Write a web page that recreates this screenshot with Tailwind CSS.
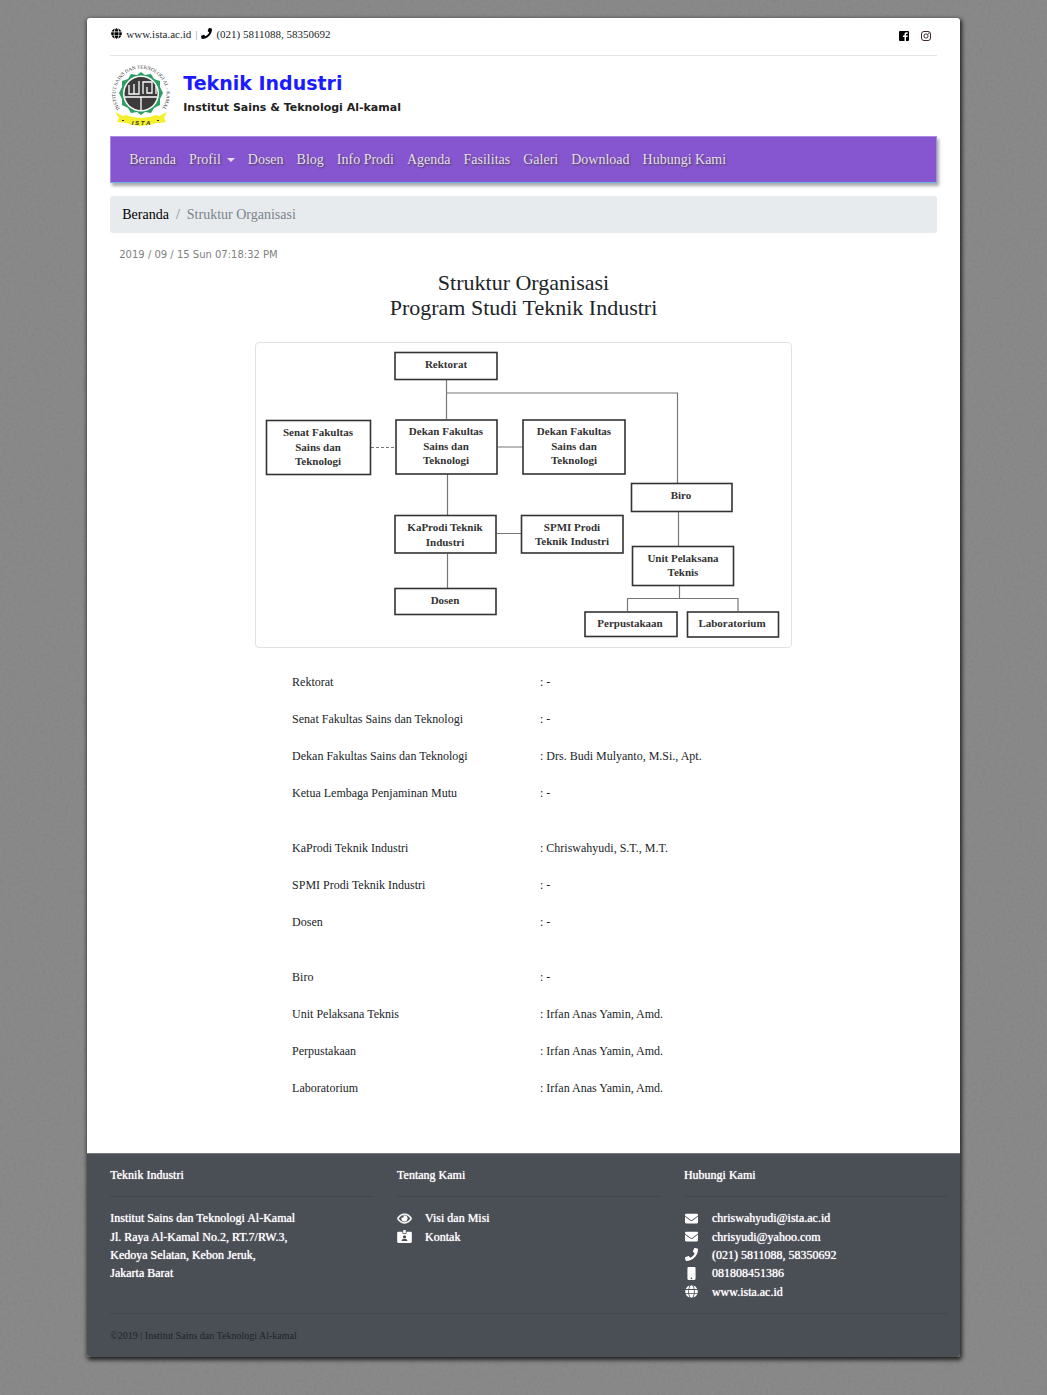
<!DOCTYPE html>
<html lang="id">
<head>
<meta charset="utf-8">
<meta name="viewport" content="width=device-width, initial-scale=1">
<title>Struktur Organisasi - Teknik Industri</title>
<script src="https://cdn.jsdelivr.net/npm/@tailwindcss/browser@4"></script>
</head>
<body class="relative isolate min-h-screen bg-[#898989] font-['Liberation_Serif',serif] text-[12px] leading-[18px] text-[#212529]">
<!-- icon sprite and background grain -->
<svg class="absolute inset-0 -z-10 h-full w-full" aria-hidden="true">
  <defs>
    <filter id="grain" x="0" y="0" width="100%" height="100%">
      <feTurbulence type="fractalNoise" baseFrequency="0.35" numOctaves="4" seed="4"/>
      <feColorMatrix type="matrix" values="0 0 0 0 0.2  0 0 0 0 0.2  0 0 0 0 0.2  0.6 0.6 0 0 -0.53"/>
    </filter>
    <symbol id="globe" viewBox="0 0 496 512"><path fill="currentColor" d="M336.500 160C322 70.700 287.800 8 248 8s-74 62.700-88.500 152h177zM152 256c0 22.200 1.200 43.500 3.300 64h185.300c2.100-20.500 3.300-41.800 3.300-64s-1.200-43.500-3.300-64H155.300c-2.100 20.500-3.300 41.800-3.300 64zm324.700-96c-28.600-67.900-86.500-120.400-158-141.600 24.400 33.800 41.200 84.700 50 141.600h108zM177.200 18.400C105.800 39.600 47.800 92.100 19.300 160h108c8.700-56.900 25.500-107.800 49.900-141.600zM487.400 192H372.700c2.100 21 3.300 42.500 3.300 64s-1.200 43-3.300 64h114.600c5.500-20.500 8.600-41.800 8.600-64s-3.100-43.500-8.500-64zM120 256c0-21.500 1.200-43 3.300-64H8.600C3.200 212.500 0 233.800 0 256s3.200 43.500 8.600 64h114.600c-2-21-3.200-42.500-3.200-64zm39.500 96c14.500 89.300 48.700 152 88.500 152s74-62.700 88.500-152h-177zm159.300 141.600c71.400-21.200 129.400-73.700 158-141.600h-108c-8.800 56.900-25.600 107.800-50 141.600zM19.300 352c28.600 67.900 86.500 120.400 158 141.600-24.400-33.800-41.200-84.700-50-141.600h-108z"/></symbol>
    <symbol id="phone" viewBox="0 0 512 512"><path fill="currentColor" d="M493.400 24.600l-104-24c-11.300-2.600-22.900 3.300-27.500 13.900l-48 112c-4.200 9.800-1.400 21.300 6.900 28l60.600 49.600c-36 76.700-98.900 140.500-177.200 177.200l-49.600-60.600c-6.800-8.300-18.200-11.100-28-6.900l-112 48C3.900 366.500-2 378.100.6 389.400l24 104C27.100 504.200 36.700 512 48 512c256.100 0 464-207.500 464-464 0-11.200-7.700-20.900-18.600-23.400z"/></symbol>
    <symbol id="mail" viewBox="0 0 512 512"><path fill="currentColor" d="M502.300 190.800c3.900-3.100 9.700-.2 9.700 4.700V400c0 26.500-21.500 48-48 48H48c-26.500 0-48-21.500-48-48V195.600c0-5 5.700-7.800 9.700-4.700 22.400 17.400 52.100 39.500 154.100 113.600 21.100 15.400 56.700 47.800 92.200 47.600 35.700.3 72-32.800 92.300-47.600 102-74.100 131.600-96.300 154-113.700zM256 320c23.200.4 56.600-29.200 73.400-41.400 132.700-96.300 142.800-104.700 173.400-128.700 5.800-4.500 9.200-11.500 9.200-18.900v-19c0-26.500-21.500-48-48-48H48c-26.500 0-48 21.500-48 48v19c0 7.400 3.400 14.300 9.200 18.900 30.600 23.900 40.700 32.400 173.400 128.700 16.800 12.200 50.200 41.800 73.400 41.400z"/></symbol>
    <symbol id="mobile" viewBox="0 0 320 512"><path fill="currentColor" d="M272 0H48C21.500 0 0 21.500 0 48v416c0 26.500 21.500 48 48 48h224c26.500 0 48-21.500 48-48V48c0-26.500-21.500-48-48-48zM160 480c-17.700 0-32-14.300-32-32s14.300-32 32-32 32 14.300 32 32-14.300 32-32 32z"/></symbol>
    <symbol id="eye" viewBox="0 0 576 512"><path fill="currentColor" stroke="currentColor" stroke-width="20" d="M288 144a110.940 110.940 0 0 0-31.240 5 55.400 55.400 0 0 1 7.240 27 56 56 0 0 1-56 56 55.400 55.400 0 0 1-27-7.240A111.710 111.710 0 1 0 288 144zm284.520 97.400C518.290 135.590 410.930 64 288 64S57.680 135.640 3.480 241.410a32.350 32.350 0 0 0 0 29.190C57.710 376.410 165.070 448 288 448s230.320-71.640 284.520-177.410a32.350 32.350 0 0 0 0-29.190zM288 400c-98.650 0-189.090-55-237.930-144C98.910 167 189.340 112 288 112s189.090 55 237.930 144C477.100 345 386.660 400 288 400z"/></symbol>
    <symbol id="badge" viewBox="0 0 576 512"><path fill="currentColor" fill-rule="evenodd" d="M48 64h160v64c0 18 14 32 32 32h96c18 0 32-14 32-32V64h160c26 0 48 22 48 48v352c0 26-22 48-48 48H48c-26 0-48-22-48-48V112c0-26 22-48 48-48zm240 144a64 64 0 1 0 0 128 64 64 0 0 0 0-128zM176 432h224v-16c0-36-28-64-64-64h-96c-36 0-64 28-64 64zM240 0h96v128h-96z"/></symbol>
  </defs>
  <rect width="100%" height="100%" filter="url(#grain)"/>
</svg>

<div class="mx-auto mt-[18px] mb-[37px] w-10/12 rounded-[3px] bg-white shadow-[1px_2px_4px_1px_#222]">
  <div class="px-[23px]">
    <div class="flex h-[38px] items-center justify-between border-b border-[#e3e3e3] text-[11px]">
      <div class="flex items-center gap-1 pb-[6px]">
        <svg class="ml-px h-[11px] w-[11px] text-black"><use href="#globe"/></svg>
        <a href="#" class="text-[#212529]">www.ista.ac.id</a>
        <span class="text-[#7fa5b5]">|</span>
        <svg class="h-[11px] w-[11px] text-black"><use href="#phone"/></svg>
        <span>(021) 5811088, 58350692</span>
      </div>
      <div class="flex items-center gap-3 pr-[6px] pb-[2px]">
        <a href="#" aria-label="Facebook"><svg class="h-[10px] w-[10px]" viewBox="0 0 20 20"><path d="M2 0h16a2 2 0 0 1 2 2v16a2 2 0 0 1-2 2h-4v-8h3l.5-3H14V7c0-1 .5-1.500 1.600-1.500h1.700V2.700C16.500 2.600 15.700 2.500 15 2.500c-2.600 0-4 1.500-4 4.200V9H8v3h3v8H2a2 2 0 0 1-2-2V2a2 2 0 0 1 2-2z"/></svg></a>
        <a href="#" aria-label="Instagram"><svg class="h-[10px] w-[10px] text-[#3d2530]" viewBox="0 0 20 20" fill="none" stroke="currentColor" stroke-width="2"><rect x="1" y="1" width="18" height="18" rx="5"/><circle cx="10" cy="10" r="4.200"/><circle cx="15.200" cy="4.800" r=".6"/></svg></a>
      </div>
    </div>

    <header class="flex h-20 gap-[11px] font-['DejaVu_Sans',sans-serif]">
      <svg class="mt-[6px] h-[66px] w-[62px] shrink-0" viewBox="0 0 62 66" role="img" aria-label="Logo ISTA">
        <path id="ring" d="M11 48A25.500 25.500 0 1 1 51 48" fill="none"/>
        <text font-family="Liberation Serif, serif" font-size="5" fill="#333"><textPath href="#ring" startOffset="50%" text-anchor="middle">INSTITUT SAINS DAN TEKNOLOGI AL - KAMAL</textPath></text>
        <path fill="#2b9e63" d="M31 10l4 3 6-1 3 5 6 2 0 6 3 6-3 6 0 6-6 3-3 5-6-1-4 3-4-3-6 1-3-5-6-3 0-6-3-6 3-6 0-6 6-2 3-5 6 1z"/>
        <circle cx="31" cy="31.500" r="18" fill="#fff"/>
        <circle cx="31" cy="31.500" r="16.500" fill="#3c3a3a"/>
        <g fill="none" stroke="#fff" stroke-width="1.300"><path d="M15 35h32M31 35v13M19 23v9h5v-10M24 32h5V19M33 32v-12h9v11h-5v-6M46 24v8"/></g>
        <path fill="#f6ef2d" d="M5 50l8 4 3-1q15 6 30 0l3 1 8-4-3 6 2 4-7 1-3 0q-15 6-30 0l-9-1 2-4z"/>
        <text x="31" y="63" text-anchor="middle" font-family="Liberation Sans, sans-serif" font-style="italic" font-weight="bold" font-size="6" fill="#333">I S T A</text>
        <path fill="#333" d="M12 58h2v1h-2zM47 58h2v1h-2z"/>
      </svg>
      <div class="pt-[14px] font-bold">
        <h1 class="text-[19px] leading-[27px] text-[#1b1bff]">Teknik Industri</h1>
        <p class="mt-[2px] text-[11px] leading-[18px] text-[#222]">Institut Sains &amp; Teknologi Al-kamal</p>
      </div>
    </header>

    <nav class="flex h-[47px] items-center gap-[13px] border border-[#a98be0] border-b-[#6fb6e8] bg-[#8655d0] px-[18px] text-[14px] text-[#e6ddf5] shadow-[2px_3px_3px_#aaa] text-shadow-[1px_1px_2px_#444]">
      <a href="#">Beranda</a>
      <a href="#" class="flex items-center gap-[6px]">Profil <span class="border-x-[4px] border-t-[4px] border-x-transparent border-t-current"></span></a>
      <a href="#">Dosen</a><a href="#">Blog</a><a href="#">Info Prodi</a><a href="#">Agenda</a><a href="#">Fasilitas</a><a href="#">Galeri</a><a href="#">Download</a><a href="#">Hubungi Kami</a>
    </nav>

    <nav aria-label="Breadcrumb" class="mt-[13px] flex h-[37px] items-center gap-[7px] rounded-[3px] bg-[#e7ebee] px-3 text-[14px] text-[#7b848c]">
      <a href="#" class="text-black">Beranda</a><span>/</span><span>Struktur Organisasi</span>
    </nav>

    <main>
      <time class="mt-[13px] block pl-[9px] font-['DejaVu_Sans',sans-serif] text-[10px] text-[#808080]">2019 / 09 / 15 Sun 07:18:32 PM</time>
      <h2 class="mt-[6px] text-center text-[22px] leading-[25px]">Struktur Organisasi<br>Program Studi Teknik Industri</h2>

      <svg class="mx-auto mt-[22px] w-full max-w-[537px] rounded-[4px] border border-[#dee2e6]" viewBox="256 343 535 304" role="img" aria-label="Bagan struktur organisasi" font-family="Liberation Serif, serif" font-size="11" font-weight="bold" text-anchor="middle" fill="#333">
        <g fill="none" stroke="#777" stroke-width="1.200">
          <path d="M446.500 380v39M446.500 393H677.500v90M498 447h25M447.500 474v41M497 533.500h24M447.500 554v34M678.500 512v34M679.500 585v13.500M627.500 611v-12.500h110.500V611"/>
          <path d="M371 447.500h25" stroke-dasharray="3 2"/>
        </g>
        <g fill="#fff" stroke="#333" stroke-width="1.600">
          <rect x="395" y="352.500" width="102" height="27"/>
          <rect x="266.500" y="420.500" width="104" height="54"/>
          <rect x="396" y="420" width="101" height="54"/>
          <rect x="523" y="420" width="102" height="54"/>
          <rect x="631.500" y="483.500" width="100.500" height="28"/>
          <rect x="395" y="515.500" width="101" height="37.500"/>
          <rect x="521.500" y="515.500" width="101.500" height="37.500"/>
          <rect x="632.500" y="546.500" width="101" height="39"/>
          <rect x="395" y="588.500" width="101" height="26"/>
          <rect x="585" y="612" width="92" height="24.500"/>
          <rect x="687.500" y="612" width="91" height="25"/>
        </g>
        <text x="446" y="368">Rektorat</text>
        <text><tspan x="318" y="436">Senat Fakultas</tspan><tspan x="318" y="451">Sains dan</tspan><tspan x="318" y="465">Teknologi</tspan></text>
        <text><tspan x="446" y="435">Dekan Fakultas</tspan><tspan x="446" y="450">Sains dan</tspan><tspan x="446" y="464">Teknologi</tspan></text>
        <text><tspan x="574" y="435">Dekan Fakultas</tspan><tspan x="574" y="450">Sains dan</tspan><tspan x="574" y="464">Teknologi</tspan></text>
        <text x="681" y="499">Biro</text>
        <text><tspan x="445" y="531">KaProdi Teknik</tspan><tspan x="445" y="546">Industri</tspan></text>
        <text><tspan x="572" y="531">SPMI Prodi</tspan><tspan x="572" y="545">Teknik Industri</tspan></text>
        <text><tspan x="683" y="562">Unit Pelaksana</tspan><tspan x="683" y="576">Teknis</tspan></text>
        <text x="445" y="604">Dosen</text>
        <text x="630" y="627">Perpustakaan</text>
        <text x="732" y="627">Laboratorium</text>
      </svg>

      <table class="mt-[15px] mb-[47px] ml-[22%] w-[60%] table-fixed text-left">
        <tbody>
          <tr class="h-[37px]"><th scope="row" class="font-normal">Rektorat</th><td>: -</td></tr>
          <tr class="h-[37px]"><th scope="row" class="font-normal">Senat Fakultas Sains dan Teknologi</th><td>: -</td></tr>
          <tr class="h-[37px]"><th scope="row" class="font-normal">Dekan Fakultas Sains dan Teknologi</th><td>: Drs. Budi Mulyanto, M.Si., Apt.</td></tr>
          <tr class="h-[37px]"><th scope="row" class="font-normal">Ketua Lembaga Penjaminan Mutu</th><td>: -</td></tr>
          <tr class="h-[18px]"><td colspan="2"></td></tr>
          <tr class="h-[37px]"><th scope="row" class="font-normal">KaProdi Teknik Industri</th><td>: Chriswahyudi, S.T., M.T.</td></tr>
          <tr class="h-[37px]"><th scope="row" class="font-normal">SPMI Prodi Teknik Industri</th><td>: -</td></tr>
          <tr class="h-[37px]"><th scope="row" class="font-normal">Dosen</th><td>: -</td></tr>
          <tr class="h-[18px]"><td colspan="2"></td></tr>
          <tr class="h-[37px]"><th scope="row" class="font-normal">Biro</th><td>: -</td></tr>
          <tr class="h-[37px]"><th scope="row" class="font-normal">Unit Pelaksana Teknis</th><td>: Irfan Anas Yamin, Amd.</td></tr>
          <tr class="h-[37px]"><th scope="row" class="font-normal">Perpustakaan</th><td>: Irfan Anas Yamin, Amd.</td></tr>
          <tr class="h-[37px]"><th scope="row" class="font-normal">Laboratorium</th><td>: Irfan Anas Yamin, Amd.</td></tr>
        </tbody>
      </table>
    </main>
  </div>

  <footer class="rounded-b-[3px] border-t border-[#777b7d] bg-[#4a4e55] pt-3 pr-3 pb-3 pl-[23px] text-white text-shadow-[0_0_1px_#fff]">
    <div class="grid grid-cols-3 gap-[23px]">
      <section>
        <h3>Teknik Industri</h3>
        <hr class="mt-3 mb-3 border-[#43474d]">
        <address class="grid h-[92px] grid-rows-5 items-center not-italic"><span>Institut Sains dan Teknologi Al-Kamal</span><span>Jl. Raya Al-Kamal No.2, RT.7/RW.3,</span><span>Kedoya Selatan, Kebon Jeruk,</span><span>Jakarta Barat</span></address>
      </section>
      <section>
        <h3>Tentang Kami</h3>
        <hr class="mt-3 mb-3 border-[#43474d]">
        <ul class="grid h-[92px] grid-rows-5 items-center">
          <li><a href="#" class="flex items-center gap-[13px]"><svg class="h-[13px] w-[15px]"><use href="#eye"/></svg>Visi dan Misi</a></li>
          <li><a href="#" class="flex items-center gap-[13px]"><svg class="h-[13px] w-[15px]"><use href="#badge"/></svg>Kontak</a></li>
        </ul>
      </section>
      <section>
        <h3>Hubungi Kami</h3>
        <hr class="mt-3 mb-3 border-[#43474d]">
        <ul class="grid h-[92px] grid-rows-5 items-center">
          <li><a href="#" class="flex items-center gap-[13px]"><svg class="h-[13px] w-[15px]"><use href="#mail"/></svg>chriswahyudi@ista.ac.id</a></li>
          <li><a href="#" class="flex items-center gap-[13px]"><svg class="h-[13px] w-[15px]"><use href="#mail"/></svg>chrisyudi@yahoo.com</a></li>
          <li class="flex items-center gap-[13px]"><svg class="h-[13px] w-[15px]"><use href="#phone"/></svg>(021) 5811088, 58350692</li>
          <li class="flex items-center gap-[13px]"><svg class="h-[13px] w-[15px]"><use href="#mobile"/></svg>081808451386</li>
          <li><a href="#" class="flex items-center gap-[13px]"><svg class="h-[13px] w-[15px]"><use href="#globe"/></svg>www.ista.ac.id</a></li>
        </ul>
      </section>
    </div>
    <hr class="mt-3 mb-[13px] border-[#43474d]">
    <p class="text-[10px] text-[#212529] text-shadow-none">©2019 | Institut Sains dan Teknologi Al-kamal</p>
  </footer>
</div>
</body>
</html>
